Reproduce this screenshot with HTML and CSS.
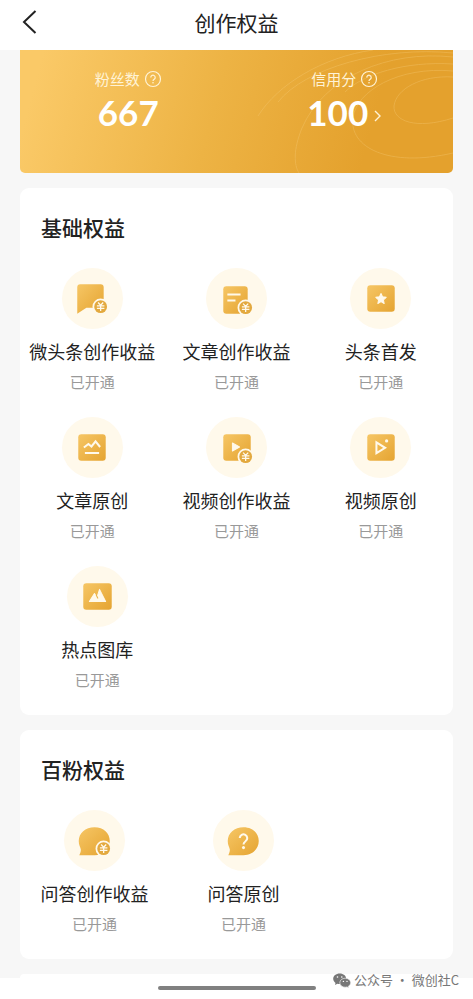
FILE: index.html
```html
<!DOCTYPE html>
<html lang="zh-CN">
<head>
<meta charset="utf-8">
<meta name="viewport" content="width=device-width, initial-scale=1">
<title>创作权益</title>
<link rel="stylesheet" href="styles.css">
</head>
<body>
<svg class="defs" aria-hidden="true">
  <defs>
    <linearGradient id="gold" x1="0" y1="0" x2="1" y2="1">
      <stop offset="0" stop-color="#f6c665"/>
      <stop offset="1" stop-color="#e5a431"/>
    </linearGradient>
    <g id="coin">
      <circle cx="38" cy="38" r="8" fill="#fff9eb"/>
      <circle cx="38" cy="38" r="6.300" fill="#e3a93f"/>
      <path d="M35.500 34 38 36.700l2.500-2.700M34.300 37.300h7.400M34.300 39.700h7.400M38 37v5.300" fill="none" stroke="#fff9eb" stroke-width="1.300"/>
    </g>
    <g id="help">
      <circle cx="9" cy="9" r="7.500" fill="none" stroke="currentColor" stroke-width="1.200"/>
      <path d="M6.800 7.400a2.200 2.200 0 1 1 3.500 1.800c-.8.600-1.300.9-1.300 1.800" fill="none" stroke="currentColor" stroke-width="1.200"/>
      <circle cx="9" cy="12.800" r=".8" fill="currentColor"/>
    </g>
  </defs>
</svg>

<header class="topbar">
  <button class="back" type="button" aria-label="返回">
    <svg width="16" height="26" viewBox="0 0 16 26"><path d="M13.500 2 2 13l11.500 11" fill="none" stroke="#222" stroke-width="2"/></svg>
  </button>
  <h1 class="title">创作权益</h1>
</header>

<main class="content">
  <section class="hero">
    <svg class="rings" viewBox="0 0 220 123" aria-hidden="true">
      <g fill="none" stroke="#f8cf80" stroke-opacity=".3">
        <path d="M220 27c-32-2-57 12-59 29-1 15 22 24 59 12"/>
        <path d="M220 21c-54-5-97 20-100 47-4 29 35 50 100 35"/>
        <path d="M220 14c-48-3-90 10-108 28"/>
        <path d="M220 7C155 0 91 27 69 78c-9 22-8 37-3 45"/>
        <path d="M220 3C150-4 72 18 45 52"/>
        <path d="M140 0C90 7 45 34 25 66"/>
      </g>
    </svg>
    <div class="stat">
      <div class="stat-name">粉丝数 <svg width="18" height="18"><use href="#help"/></svg></div>
      <div class="stat-value">667</div>
    </div>
    <div class="stat">
      <div class="stat-name">信用分 <svg width="18" height="18"><use href="#help"/></svg></div>
      <a class="stat-value" href="#">100<svg class="more" width="8" height="14" viewBox="0 0 8 14"><path d="m1 2 5 5-5 5" fill="none" stroke="#fff3d6" stroke-width="1.400"/></svg></a>
    </div>
  </section>

  <section class="card">
    <h2 class="card-title">基础权益</h2>
    <ul class="grid">
      <li class="item">
        <svg class="icon" viewBox="0 0 60 60"><path d="M18 16h20a3 3 0 0 1 3 3v20H24l-9 6V19a3 3 0 0 1 3-3z" fill="url(#gold)"/><use href="#coin"/></svg>
        <span class="name">微头条创作收益</span><span class="state">已开通</span>
      </li>
      <li class="item">
        <svg class="icon" viewBox="0 0 60 60"><rect x="17" y="18" width="24" height="27" rx="3" fill="url(#gold)"/><path d="M21 26h13M21 32h8" stroke="#fff9eb" stroke-width="2"/><use href="#coin" x="1" y="1"/></svg>
        <span class="name">文章创作收益</span><span class="state">已开通</span>
      </li>
      <li class="item">
        <svg class="icon" viewBox="0 0 60 60"><rect x="17" y="17" width="27" height="26" rx="3" fill="url(#gold)"/><path d="m30.500 25 1.500 3.300 3.600.5-2.700 2.500.7 3.600-3.100-1.800-3.100 1.800.7-3.600-2.700-2.500 3.600-.5z" fill="#fff9eb" stroke="#fff9eb" stroke-linejoin="round"/></svg>
        <span class="name">头条首发</span><span class="state">已开通</span>
      </li>
      <li class="item">
        <svg class="icon" viewBox="0 0 60 60"><rect x="16" y="17" width="27" height="26" rx="3" fill="url(#gold)"/><path d="m21.500 30 4.500-3.500 3 2.500 4-5 4.500 5.500M22.500 35.500h14" fill="none" stroke="#fff9eb" stroke-width="2"/></svg>
        <span class="name">文章原创</span><span class="state">已开通</span>
      </li>
      <li class="item">
        <svg class="icon" viewBox="0 0 60 60"><rect x="17" y="17" width="27" height="26" rx="3" fill="url(#gold)"/><path d="M26 25.500v8l7-4z" fill="#fff9eb" stroke="#fff9eb" stroke-linejoin="round"/><use href="#coin" x="1" y="1"/></svg>
        <span class="name">视频创作收益</span><span class="state">已开通</span>
      </li>
      <li class="item">
        <svg class="icon" viewBox="0 0 60 60"><rect x="17" y="17" width="27" height="26" rx="3" fill="url(#gold)"/><path d="M26 25v10.500l8.500-5.200z" fill="none" stroke="#fff9eb" stroke-width="2"/><circle cx="36" cy="23.500" r="1.600" fill="#fff9eb"/></svg>
        <span class="name">视频原创</span><span class="state">已开通</span>
      </li>
    </ul>
    <ul class="grid grid-last">
      <li class="item">
        <svg class="icon" viewBox="0 0 60 60"><rect x="16" y="17" width="28" height="26" rx="3" fill="url(#gold)"/><path d="m22 35 5-8 2.500 4 2.500-8 6 12z" fill="#fff9eb" stroke="#fff9eb" stroke-linejoin="round"/><path d="m28.700 28.500 1.800 3.500" stroke="#e9b144"/></svg>
        <span class="name">热点图库</span><span class="state">已开通</span>
      </li>
    </ul>
  </section>

  <section class="card">
    <h2 class="card-title">百粉权益</h2>
    <ul class="grid grid-wide">
      <li class="item">
        <svg class="icon" viewBox="0 0 60 60"><path d="M30 17c-9 0-15.500 6-15.500 13.500 0 4 1.500 6 2 8 .3 2-.5 4-1.500 6h15c9 0 15-6.500 15-14S39 17 30 17z" fill="url(#gold)"/><use href="#coin" x="1"/></svg>
        <span class="name">问答创作收益</span><span class="state">已开通</span>
      </li>
      <li class="item">
        <svg class="icon" viewBox="0 0 60 60"><path d="M30 17c-9 0-15.500 6-15.500 13.500 0 4 1.500 6 2 8 .3 2-.5 4-1.500 6h15c9 0 15-6.500 15-14S39 17 30 17z" fill="url(#gold)"/><path d="M26.300 27.500a3.700 3.700 0 1 1 5.700 3.200c-1.400 1-2 1.500-2 3.300" fill="none" stroke="#fff9eb" stroke-width="2"/><circle cx="30" cy="37" r="1.500" fill="#fff9eb"/></svg>
        <span class="name">问答原创</span><span class="state">已开通</span>
      </li>
    </ul>
  </section>

  <div class="next-card"></div>
</main>

<footer class="bottom">
  <div class="handle"></div>
  <div class="credit">
    <svg width="18" height="15" viewBox="0 0 18 15" aria-hidden="true">
      <path d="M6.700.5C3 .5.200 2.900.200 5.800c0 1.700.9 3.100 2.300 4.100L2 12l2.400-1.300c.8.200 1.500.3 2.300.3 3.700 0 6.500-2.300 6.500-5.200S10.400.5 6.700.5z" fill="#777"/>
      <path d="M12.200 5.200c-3 0-5.400 2-5.400 4.500s2.400 4.500 5.400 4.500c.6 0 1.200-.1 1.800-.3l2 1-.5-1.800c1.300-.8 2.200-2 2.200-3.400 0-2.500-2.500-4.500-5.500-4.500z" fill="#777" stroke="#fff" stroke-width=".6"/>
      <g fill="#fff"><circle cx="4.500" cy="4" r=".8"/><circle cx="8.800" cy="4" r=".8"/><circle cx="10.400" cy="8.400" r=".7"/><circle cx="14" cy="8.400" r=".7"/></g>
    </svg>
    <span>公众号 · 微创社C</span>
  </div>
</footer>
</body>
</html>
```
FILE: styles.css
```css
* { box-sizing: border-box; }

body {
  margin: 0;
  background: #f7f7f7;
  color: #222;
  font-family: "Noto Sans CJK SC", sans-serif;
}

.defs { position: absolute; width: 0; height: 0; }

svg { display: block; flex: none; }

.topbar {
  display: grid;
  grid-template-columns: 38px 1fr 38px;
  align-items: center;
  height: 50px;
  padding-bottom: 7px;
  background: #fff;
}

.back {
  justify-self: end;
  padding: 0;
  border: 0;
  background: none;
}

.title {
  margin: 0;
  text-align: center;
  font-size: 21px;
  line-height: 30px;
  font-weight: 400;
}

.content {
  display: flex;
  flex-direction: column;
  gap: 15px;
  padding: 0 20px;
}

.hero {
  position: relative;
  display: grid;
  grid-template-columns: 1fr 1fr;
  height: 123px;
  padding-top: 18px;
  overflow: hidden;
  border-radius: 0 0 5px 5px;
  background: linear-gradient(105deg, #fac967 5%, #edb344 45%, #e4a12d 80%);
}

.rings {
  position: absolute;
  top: 0;
  right: 0;
  width: 220px;
  height: 123px;
}

.stat {
  position: relative;
  display: flex;
  flex-direction: column;
  align-items: center;
}

.stat-name {
  display: flex;
  align-items: center;
  gap: 4px;
  color: #fff3d6;
  font-size: 15px;
  line-height: 22px;
}

.stat-value {
  display: flex;
  align-items: center;
  gap: 6px;
  color: #fff;
  font-family: Lato, sans-serif;
  font-size: 35px;
  font-weight: 700;
  line-height: 44px;
  text-decoration: none;
}

.more { margin-top: 8px; }

.card {
  padding: 24px 0;
  border-radius: 9px;
  background: #fff;
}

.card-title {
  margin: 0 0 26px;
  padding-left: 21px;
  font-size: 21px;
  font-weight: 500;
  line-height: 30px;
}

.grid {
  display: grid;
  grid-template-columns: repeat(3, 1fr);
  row-gap: 24px;
  margin: 0;
  padding: 0;
  list-style: none;
}

.grid-last {
  margin-top: 24px;
  padding-left: 6px;
}

.grid-wide { grid-template-columns: repeat(2, 149px); }

.item {
  display: flex;
  flex-direction: column;
  align-items: center;
  white-space: nowrap;
}

.icon {
  width: 61px;
  height: 61px;
  border-radius: 50%;
  background: #fff9eb;
}

.name {
  margin-top: 9px;
  font-size: 18px;
  line-height: 26px;
}

.state {
  margin-top: 7px;
  color: #999;
  font-size: 15px;
  line-height: 22px;
}

.next-card {
  height: 4px;
  border-radius: 4px 4px 0 0;
  background: #fff;
}

.bottom {
  position: relative;
  height: 21px;
  background: #fff;
}

.handle {
  position: absolute;
  left: 50%;
  top: 8px;
  width: 158px;
  height: 4px;
  margin-left: -79px;
  border-radius: 2px;
  background: #808080;
}

.credit {
  position: absolute;
  right: 14px;
  top: -8px;
  display: flex;
  align-items: center;
  gap: 3px;
  color: #777;
  font-size: 13px;
  line-height: 20px;
}
```
